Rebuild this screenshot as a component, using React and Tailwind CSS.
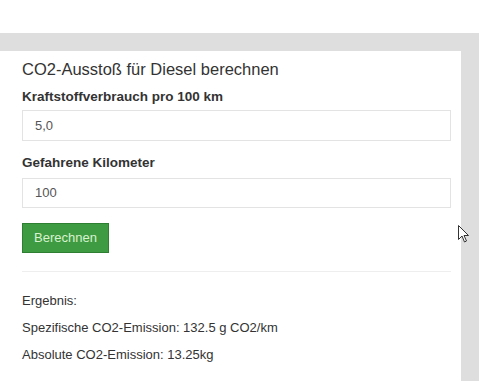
export default function App() {
  return (
    <div className="relative w-[500px] h-[382px] bg-white overflow-hidden" style={{ fontFamily: '"Liberation Sans", Arial, sans-serif' }}>
      <div className="h-[33px]" />
      <div className="w-[479px] h-[348px] bg-[#dedede] pt-[18px] pr-[18px]">
        <div className="h-full bg-white pl-[22px] pr-[10px] pt-[8px]">
          <h1 className="text-[16.5px] leading-[20px] text-[#333] m-0">CO2-Ausstoß für Diesel berechnen</h1>
          <div className="mt-[10px] text-[13.5px] leading-[16px] font-bold text-[#333]">Kraftstoffverbrauch pro 100 km</div>
          <div className="mt-[5px] h-[31px] border border-[#e3e3e3] flex items-center pl-[12px] text-[13px] text-[#555]">5,0</div>
          <div className="mt-[14px] text-[13.5px] leading-[16px] font-bold text-[#333]">Gefahrene Kilometer</div>
          <div className="mt-[7px] h-[30px] border border-[#e3e3e3] flex items-center pl-[12px] text-[13px] text-[#555]">100</div>
          <div className="mt-[15px] w-[87px] h-[30px] bg-[#3f9b41] border border-[#2f7f32] flex items-center justify-center text-[13px] text-[#d8f2d0]">Berechnen</div>
          <div className="mt-[18px] h-px bg-[#eeeeee]" />
          <div className="mt-[21px] flex flex-col gap-[11px] text-[13px] leading-[16px] text-[#333]">
            <div>Ergebnis:</div>
            <div>Spezifische CO2-Emission: 132.5 g CO2/km</div>
            <div>Absolute CO2-Emission: 13.25kg</div>
          </div>
        </div>
      </div>
      <svg className="absolute left-[458px] top-[225px]" width="11" height="18" viewBox="0 0 11 18">
        <path d="M0.5 0.5 L0.5 14.5 L4 11 L6.5 17 L8.5 16 L6 10.5 L10.5 10.5 Z" fill="white" stroke="#333" strokeWidth="1" strokeLinejoin="round" />
      </svg>
    </div>
  );
}
